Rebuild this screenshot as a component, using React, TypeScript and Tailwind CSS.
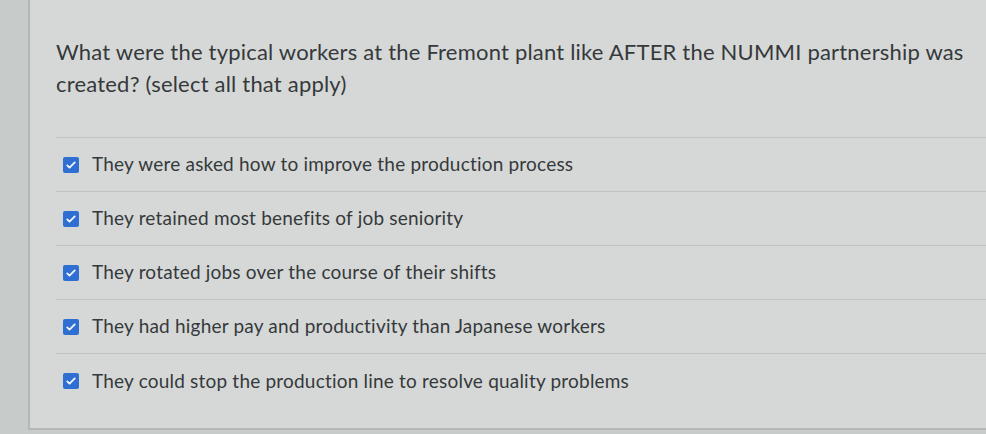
const options = [
  'They were asked how to improve the production process',
  'They retained most benefits of job seniority',
  'They rotated jobs over the course of their shifts',
  'They had higher pay and productivity than Japanese workers',
  'They could stop the production line to resolve quality problems',
];

function CheckBox() {
  return (
    <span className="flex h-[16px] w-[16px] shrink-0 items-center justify-center rounded-[2px] bg-[#2f6fd2]">
      <svg viewBox="0 0 16 16" className="h-[12px] w-[12px]" fill="none">
        <path d="M3 8.5l3 3 7-7" stroke="#f4f6f8" strokeWidth="2.4" strokeLinecap="round" strokeLinejoin="round" />
      </svg>
    </span>
  );
}

export default function App() {
  return (
    <div className="h-[434px] w-[986px] overflow-hidden bg-[#c7cbca] pl-[28px] font-['Lato','Liberation_Sans',sans-serif] text-[#35393b]">
      <div className="h-[430px] border-b-2 border-l-2 border-[#b3b7b6] bg-[#d5d8d7] pl-[26px] pt-[36px]">
        <p className="w-[930px] text-[22px] leading-[32px] tracking-[0.2px]">
          What were the typical workers at the Fremont plant like AFTER the NUMMI partnership was created? (select all that apply)
        </p>
        <div className="mt-[37px] border-t border-[#c0c3c2]">
          {options.map((o) => (
            <div key={o} className="flex h-[54px] items-center gap-[13px] border-b border-[#bfc2c1] pl-[7px] last:border-b-0">
              <CheckBox />
              <span className="text-[19px] tracking-[0.2px]">{o}</span>
            </div>
          ))}
        </div>
      </div>
    </div>
  );
}
